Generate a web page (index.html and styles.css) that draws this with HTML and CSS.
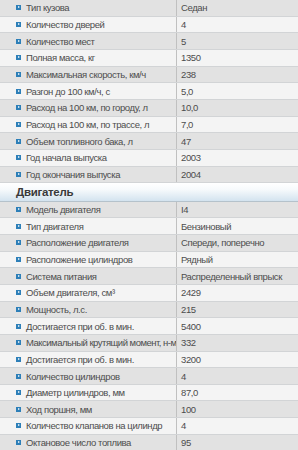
FILE: index.html
```html
<!DOCTYPE html>
<html lang="ru">
<head>
<meta charset="utf-8">
<link rel="stylesheet" href="styles.css">
</head>
<body>
<div class="specs">
  <div class="section">
    <div class="row"><div class="label"><span class="ico"></span>Тип кузова</div><div class="val">Седан</div></div>
    <div class="row"><div class="label"><span class="ico"></span>Количество дверей</div><div class="val">4</div></div>
    <div class="row"><div class="label"><span class="ico"></span>Количество мест</div><div class="val">5</div></div>
    <div class="row"><div class="label"><span class="ico"></span>Полная масса, кг</div><div class="val">1350</div></div>
    <div class="row"><div class="label"><span class="ico"></span>Максимальная скорость, км/ч</div><div class="val">238</div></div>
    <div class="row"><div class="label"><span class="ico"></span>Разгон до 100 км/ч, с</div><div class="val">5,0</div></div>
    <div class="row"><div class="label"><span class="ico"></span>Расход на 100 км, по городу, л</div><div class="val">10,0</div></div>
    <div class="row"><div class="label"><span class="ico"></span>Расход на 100 км, по трассе, л</div><div class="val">7,0</div></div>
    <div class="row"><div class="label"><span class="ico"></span>Объем топливного бака, л</div><div class="val">47</div></div>
    <div class="row"><div class="label"><span class="ico"></span>Год начала выпуска</div><div class="val">2003</div></div>
    <div class="row"><div class="label"><span class="ico"></span>Год окончания выпуска</div><div class="val">2004</div></div>
  </div>
  <div class="head">Двигатель</div>
  <div class="section">
    <div class="row"><div class="label"><span class="ico"></span>Модель двигателя</div><div class="val">I4</div></div>
    <div class="row"><div class="label"><span class="ico"></span>Тип двигателя</div><div class="val">Бензиновый</div></div>
    <div class="row"><div class="label"><span class="ico"></span>Расположение двигателя</div><div class="val">Спереди, поперечно</div></div>
    <div class="row"><div class="label"><span class="ico"></span>Расположение цилиндров</div><div class="val">Рядный</div></div>
    <div class="row"><div class="label"><span class="ico"></span>Система питания</div><div class="val">Распределенный впрыск</div></div>
    <div class="row"><div class="label"><span class="ico"></span>Объем двигателя, см³</div><div class="val">2429</div></div>
    <div class="row"><div class="label"><span class="ico"></span>Мощность, л.с.</div><div class="val">215</div></div>
    <div class="row"><div class="label"><span class="ico"></span>Достигается при об. в мин.</div><div class="val">5400</div></div>
    <div class="row"><div class="label"><span class="ico"></span><span class="tight">Максимальный крутящий момент, н-м</span></div><div class="val">332</div></div>
    <div class="row"><div class="label"><span class="ico"></span>Достигается при об. в мин.</div><div class="val">3200</div></div>
    <div class="row"><div class="label"><span class="ico"></span>Количество цилиндров</div><div class="val">4</div></div>
    <div class="row"><div class="label"><span class="ico"></span>Диаметр цилиндров, мм</div><div class="val">87,0</div></div>
    <div class="row"><div class="label"><span class="ico"></span>Ход поршня, мм</div><div class="val">100</div></div>
    <div class="row"><div class="label"><span class="ico"></span>Количество клапанов на цилиндр</div><div class="val">4</div></div>
    <div class="row"><div class="label"><span class="ico"></span>Октановое число топлива</div><div class="val">95</div></div>
  </div>
</div>
</body>
</html>
```
FILE: styles.css
```css
html, body {
  margin: 0;
  padding: 0;
  background: #f4f4f4;
}
.specs {
  width: 298px;
  font-family: "Liberation Sans", Arial, sans-serif;
  font-size: 9.5px;
  letter-spacing: -0.4px;
  color: #4d4d4d;
}
.row {
  display: grid;
  grid-template-columns: 176px 1fr;
  height: 16.67px;
  box-sizing: border-box;
  border-bottom: 1px solid #d2d4d6;
  background: #f4f4f4;
}
.section .row:nth-child(odd) {
  background: #e2e2e2;
}
.label {
  display: flex;
  align-items: center;
  padding-left: 16px;
  white-space: nowrap;
  overflow: hidden;
}
.tight {
  letter-spacing: -0.5px;
}
.ico {
  position: relative;
  width: 5px;
  height: 5px;
  background: #2d7fb8;
  margin-right: 5px;
  flex: none;
}
.ico::after {
  content: "";
  position: absolute;
  left: 2px;
  top: 1px;
  border-left: 2px solid #fff;
  border-top: 1.5px solid transparent;
  border-bottom: 1.5px solid transparent;
}
.val {
  display: flex;
  align-items: center;
  border-left: 1px solid #c0c0c0;
  padding-left: 4px;
  white-space: nowrap;
}
.head {
  height: 18.4px;
  box-sizing: border-box;
  display: flex;
  align-items: center;
  padding-left: 16px;
  font-weight: bold;
  font-size: 11.5px;
  letter-spacing: -0.3px;
  color: #3a3a3a;
  background: linear-gradient(#ffffff 0%, #f7fafc 35%, #d3e3ef 100%);
  border-bottom: 1px solid #b5c2cb;
}
```
